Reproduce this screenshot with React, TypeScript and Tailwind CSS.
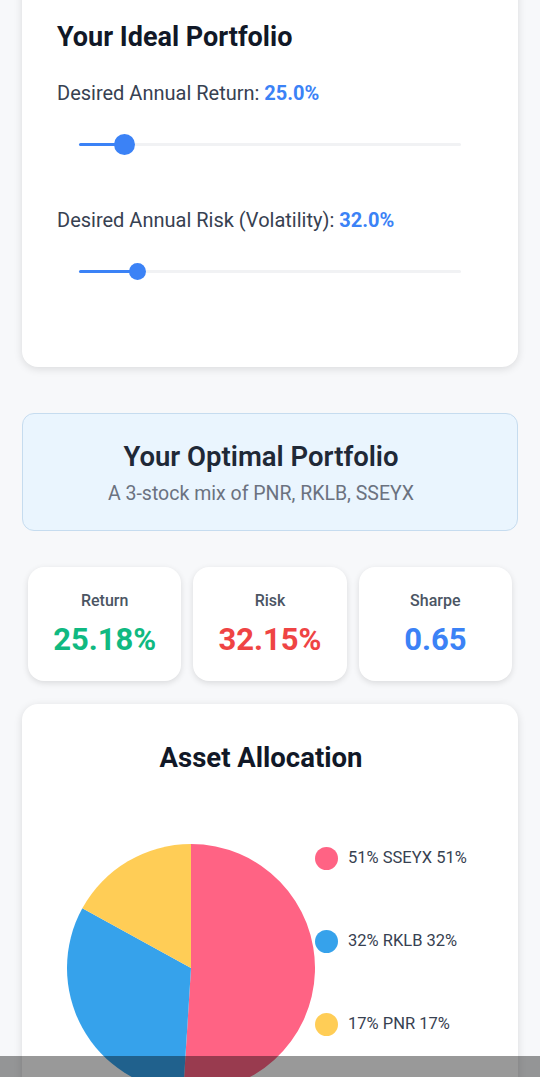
import React from 'react'

const slices = [
  { label: '51% SSEYX 51%', value: 51, color: '#ff6384' },
  { label: '32% RKLB 32%', value: 32, color: '#36a2eb' },
  { label: '17% PNR 17%', value: 17, color: '#ffcd56' },
]

function PieChart() {
  const r = 124
  const c = 124
  let start = 0
  const total = slices.reduce((s, x) => s + x.value, 0)
  return (
    <svg width="248" height="248" viewBox="0 0 248 248" className="shrink-0">
      {slices.map((s) => {
        const a0 = (start / total) * Math.PI * 2
        start += s.value
        const a1 = (start / total) * Math.PI * 2
        const x0 = c + r * Math.sin(a0)
        const y0 = c - r * Math.cos(a0)
        const x1 = c + r * Math.sin(a1)
        const y1 = c - r * Math.cos(a1)
        const large = a1 - a0 > Math.PI ? 1 : 0
        return (
          <path
            key={s.label}
            d={`M${c},${c} L${x0},${y0} A${r},${r} 0 ${large} 1 ${x1},${y1} Z`}
            fill={s.color}
          />
        )
      })}
    </svg>
  )
}

function Slider({ pct, thumb }: { pct: number; thumb: 'lg' | 'sm' }) {
  return (
    <div className="relative mx-[22px] h-[24px] flex items-center">
      <div className="w-full h-[3px] bg-[#f1f2f4] rounded-full" />
      <div className="absolute left-0 h-[3px] bg-[#3b82f6] rounded-full" style={{ width: `${pct}%` }} />
      <div
        className={
          thumb === 'lg'
            ? 'absolute w-[21px] h-[21px] -ml-[10px] rounded-full bg-[#3b82f6]'
            : 'absolute w-[17px] h-[17px] -ml-[8px] rounded-full bg-[#3b82f6]'
        }
        style={{ left: `${pct}%` }}
      />
    </div>
  )
}

function Stat({ label, value, color }: { label: string; value: string; color: string }) {
  return (
    <div className="bg-white rounded-2xl shadow-[0_2px_6px_rgba(0,0,0,0.12)] flex flex-col items-center pt-[23px] pb-[23px]">
      <div className="text-[16px] leading-[22px] font-medium text-[#4b5563]">{label}</div>
      <div className={`mt-[10px] text-[31px] leading-[36px] font-bold ${color}`}>{value}</div>
    </div>
  )
}

export default function App() {
  return (
    <div className="min-h-screen bg-[#f7f8fa] font-['Roboto',sans-serif] px-[22px] pb-10 overflow-hidden">
      {/* ideal portfolio */}
      <div className="-mt-[24px] bg-white rounded-2xl shadow-[0_2px_8px_rgba(0,0,0,0.12)] px-[35px] pt-[45px] pb-[84px]">
        <h2 className="text-[27px] leading-[32px] font-bold text-[#111827]">Your Ideal Portfolio</h2>
        <div className="mt-[26px] text-[20px] leading-[28px] text-[#374151]">
          Desired Annual Return: <span className="font-bold text-[#3b82f6]">25.0%</span>
        </div>
        <div className="mt-[25px]">
          <Slider pct={11.8} thumb="lg" />
        </div>
        <div className="mt-[50px] text-[20px] leading-[28px] text-[#374151]">
          Desired Annual Risk (Volatility): <span className="font-bold text-[#3b82f6]">32.0%</span>
        </div>
        <div className="mt-[25px]">
          <Slider pct={15.2} thumb="sm" />
        </div>
      </div>

      {/* optimal portfolio */}
      <div className="mt-[46px] bg-[#eaf5fe] border border-[#c6dcef] rounded-xl flex flex-col items-center pt-[26px] pb-[23px] pr-[18px]">
        <h2 className="text-[27.5px] leading-[34px] font-semibold text-[#1f2937]">Your Optimal Portfolio</h2>
        <div className="mt-[7px] text-[19.5px] leading-[26px] text-[#6b7280]">A 3-stock mix of PNR, RKLB, SSEYX</div>
      </div>

      {/* stats */}
      <div className="mt-[36px] grid grid-cols-3 gap-3 px-[6px]">
        <Stat label="Return" value="25.18%" color="text-[#10b981]" />
        <Stat label="Risk" value="32.15%" color="text-[#ef4444]" />
        <Stat label="Sharpe" value="0.65" color="text-[#3b82f6]" />
      </div>

      {/* allocation */}
      <div className="mt-[23px] bg-white rounded-2xl shadow-[0_2px_8px_rgba(0,0,0,0.12)] pt-[38px] pb-[40px]">
        <h2 className="text-center pr-[18px] text-[27.5px] leading-[32px] font-bold text-[#111827]">Asset Allocation</h2>
        <div className="mt-[70px] flex items-start pl-[45px]">
          <PieChart />
          <div className="flex flex-col gap-[60px] pt-[3px]">
            {slices.map((s) => (
              <div key={s.label} className="flex items-center gap-[10px] h-[23px]">
                <span className="w-[23px] h-[23px] rounded-full" style={{ backgroundColor: s.color }} />
                <span className="text-[16.5px] text-[#374151]">{s.label}</span>
              </div>
            ))}
          </div>
        </div>
      </div>

      <div className="fixed bottom-0 left-0 w-full h-[21px] bg-black/40" />
    </div>
  )
}
